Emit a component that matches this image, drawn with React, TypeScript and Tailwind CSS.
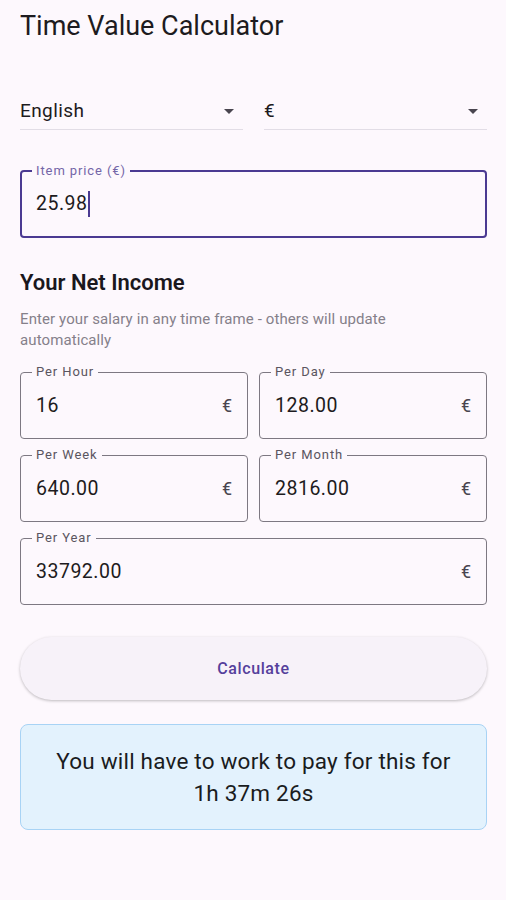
import type { ReactNode } from 'react'

const incomeFields = [
  { label: 'Per Hour', value: '16' },
  { label: 'Per Day', value: '128.00' },
  { label: 'Per Week', value: '640.00' },
  { label: 'Per Month', value: '2816.00' },
]

function Caret() {
  return (
    <svg width="10" height="5" viewBox="0 0 10 5" className="flex-shrink-0">
      <path d="M0 0h10L5 5z" fill="#49454f" />
    </svg>
  )
}

function Dropdown({ value }: { value: string }) {
  return (
    <div className="flex-1 h-[40px] pt-[3px] flex items-center justify-between pr-[9px] border-b border-[#e2dde6]">
      <span className="text-[19px] tracking-[0.4px] text-[#1d1b20]">{value}</span>
      <Caret />
    </div>
  )
}

function OutlinedField({ label, children, className = '' }: { label: string; children: ReactNode; className?: string }) {
  return (
    <div className={`relative h-[67px] rounded-[4px] border border-[#7d7882] flex items-center justify-between pl-[15px] pr-[15px] ${className}`}>
      <span className="absolute -top-[9px] left-[11px] px-1 bg-[#fdf8fd] text-[13px] leading-4 tracking-[0.9px] text-[#5a5560]">
        {label}
      </span>
      {children}
    </div>
  )
}

export default function App() {
  return (
    <div className="min-h-screen bg-[#fdf8fd] pl-5 pr-[19px] pb-10 font-['Roboto',sans-serif] text-[#1d1b20]">
      <h1 className="pt-[10px] text-[27px] leading-8 text-[#1d1b20]">Time Value Calculator</h1>

      {/* Language / currency */}
      <div className="mt-[48px] flex gap-[21px]">
        <Dropdown value="English" />
        <Dropdown value="€" />
      </div>

      {/* Item price */}
      <div className="relative mt-[40px] h-[68px] rounded-[4px] border-2 border-[#4b3a92] flex items-center pl-[14px]">
        <span className="absolute -top-[9px] left-[10px] px-1 bg-[#fdf8fd] text-[13px] leading-4 tracking-[0.9px] text-[#7466a8]">
          Item price (€)
        </span>
        <span className="text-[19.5px] tracking-[0.5px]">25.98</span>
        <span className="ml-px w-[2px] h-[26px] bg-[#4b3a92]" />
      </div>

      {/* Income */}
      <h2 className="mt-[31px] text-[22px] leading-7 font-semibold text-[#1a171d]">Your Net Income</h2>
      <p className="mt-[12px] pr-[40px] text-[15px] leading-[21px] tracking-[0.1px] text-[#85808a]">
        Enter your salary in any time frame - others will update automatically
      </p>

      <div className="mt-[21px] grid grid-cols-2 gap-x-[11px] gap-y-4">
        {incomeFields.map(({ label, value }) => (
          <OutlinedField key={label} label={label}>
            <span className="text-[19.5px] tracking-[0.5px]">{value}</span>
            <span className="text-[18px] text-[#49454f]">€</span>
          </OutlinedField>
        ))}
        <OutlinedField label="Per Year" className="col-span-2">
          <span className="text-[19.5px] tracking-[0.5px]">33792.00</span>
          <span className="text-[18px] text-[#49454f]">€</span>
        </OutlinedField>
      </div>

      <button className="mt-[32px] w-full h-[63px] rounded-full bg-[#f7f2f9] shadow-[0_1px_3px_rgba(0,0,0,0.25)] text-[16px] tracking-[0.6px] font-medium text-[#55409c]">
        Calculate
      </button>

      <div className="mt-[24px] h-[106px] rounded-lg border border-[#a8d3f5] bg-[#e3f2fd] flex items-center justify-center text-center">
        <p className="text-[22.5px] leading-8 tracking-[0.2px] text-[#1a1c1e]">
          You will have to work to pay for this for
          <br />
          1h 37m 26s
        </p>
      </div>
    </div>
  )
}
